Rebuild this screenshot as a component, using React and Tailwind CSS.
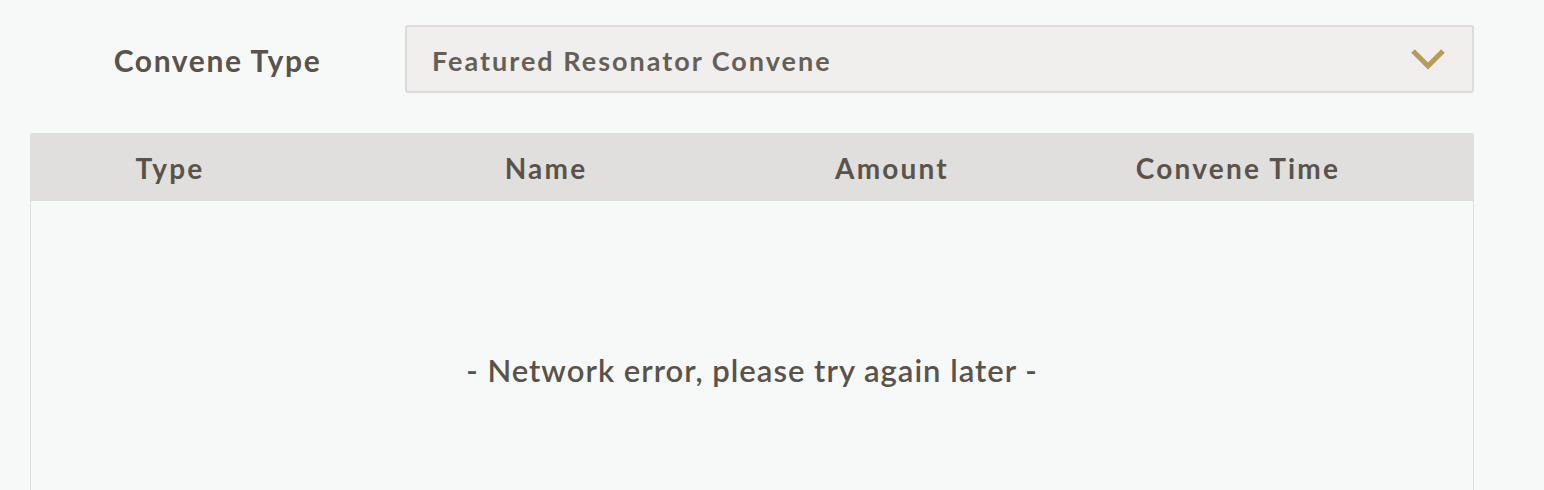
import React from "react";

export default function App() {
  const font = { fontFamily: "Lato, 'Noto Sans', sans-serif" };
  return (
    <div className="min-h-[490px] w-full bg-[#f7f9f8] pl-[30px] pt-[25px]" style={font}>
      <div className="w-[1444px]">
        <div className="flex items-center">
          <div className="w-[375px] pt-[2px] text-center text-[30px] font-bold tracking-[1.6px] text-[#5a534b]">Convene Type</div>
          <div className="flex h-[68px] flex-1 items-center justify-between rounded-[3px] border-2 border-[#dcdbd9] bg-[#f0efed] pl-[25px] pr-[26px]">
            <span className="pt-[5px] text-[27px] font-bold tracking-[2px] text-[#675f57]">Featured Resonator Convene</span>
            <svg width="36" height="24" viewBox="0 0 36 24" fill="none">
              <path d="M3 4 L18 19 L33 4" stroke="#b89a5b" strokeWidth="5" />
            </svg>
          </div>
        </div>
        <div className="mt-[40px]">
          <div className="grid h-[68px] grid-cols-[280px_472px_220px_472px] items-center rounded-t-[3px] bg-[#e0dfdd] pt-[2px] text-[28px] font-bold tracking-[2.2px] text-[#5a534b]">
            <div className="text-center">Type</div>
            <div className="text-center">Name</div>
            <div className="text-center">Amount</div>
            <div className="text-center">Convene Time</div>
          </div>
          <div className="flex h-[300px] justify-center border-x border-[#e0dfdd] pt-[146px]">
            <span className="text-[31px] font-semibold tracking-[1px] text-[#5a534b]">- Network error, please try again later -</span>
          </div>
        </div>
      </div>
    </div>
  );
}
